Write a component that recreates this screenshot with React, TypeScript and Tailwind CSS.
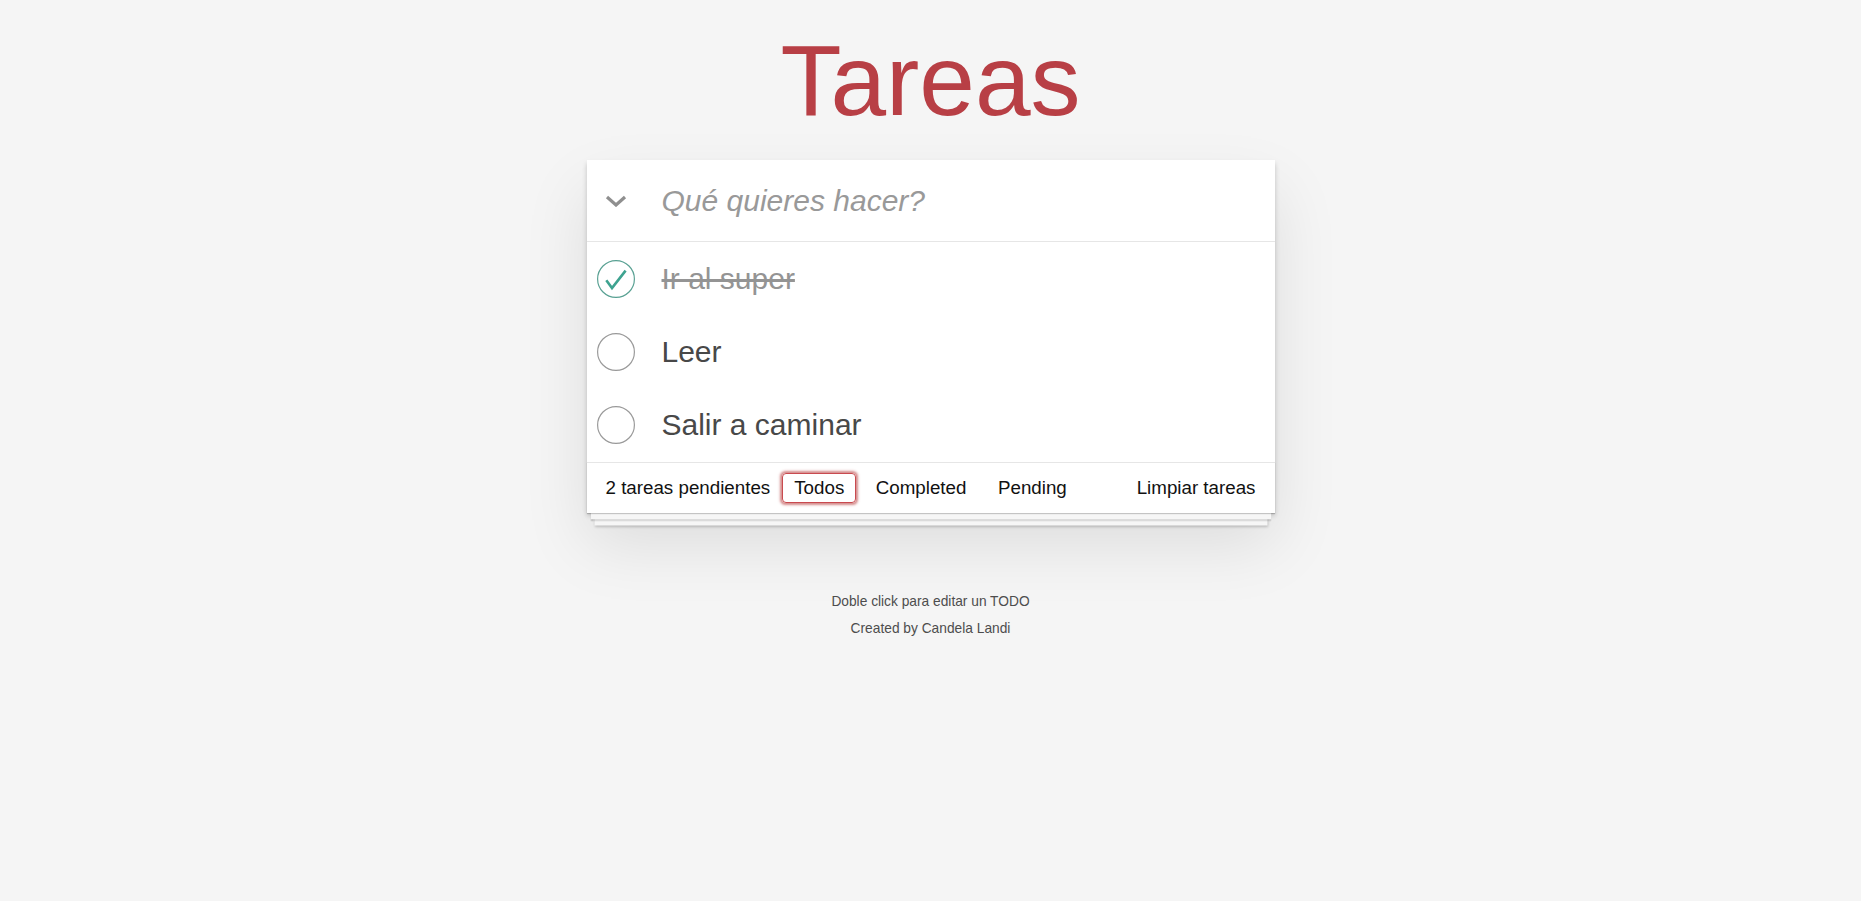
import React from "react";

interface Todo {
  id: number;
  text: string;
  done: boolean;
}

const todos: Todo[] = [
  { id: 1, text: "Ir al super", done: true },
  { id: 2, text: "Leer", done: false },
  { id: 3, text: "Salir a caminar", done: false },
];

const filters = ["Todos", "Completed", "Pending"];

const ToggleCircle: React.FC<{ done: boolean }> = ({ done }) => (
  <svg width="38" height="38" viewBox="0 0 38 38" className="block">
    <circle
      cx="19"
      cy="19"
      r="18.4"
      fill="none"
      stroke={done ? "#59a193" : "#9a9a9a"}
      strokeWidth="1.2"
    />
    {done && (
      <polyline
        points="9.3,20.3 15,28 28.6,10.6"
        fill="none"
        stroke="#3ea390"
        strokeWidth="2.6"
        strokeLinejoin="miter"
      />
    )}
  </svg>
);

const TodoRow: React.FC<{ todo: Todo }> = ({ todo }) => (
  <li className="flex h-[73.33px] items-center">
    <div className="flex w-[75px] shrink-0 pl-[10px]">
      <ToggleCircle done={todo.done} />
    </div>
    <label
      className={`text-[30px] leading-[36px] ${
        todo.done ? "text-[#949494] line-through" : "text-[#484848]"
      }`}
    >
      {todo.text}
    </label>
  </li>
);

const Footer: React.FC = () => (
  <footer className="grid h-[51px] grid-cols-[1fr_auto_1fr] items-center border-t border-[#e6e6e6] px-[19px] text-[18.75px] leading-[25px] text-[#111]">
    <span className="justify-self-start">2 tareas pendientes</span>
    <ul className="flex items-center">
      {filters.map((f) => (
        <li key={f}>
          <a
            className={`mx-[3.75px] flex h-[30px] items-center rounded-[4px] border-[1.25px] px-[11px] ${
              f === "Todos"
                ? "border-[#c94a4f] shadow-[0_0_2.5px_1.5px_rgba(207,125,125,0.9)]"
                : "border-transparent"
            }`}
          >
            {f}
          </a>
        </li>
      ))}
    </ul>
    <button className="justify-self-end text-[18.75px] leading-[25px] text-[#111]">
      Limpiar tareas
    </button>
  </footer>
);

export default function App() {
  return (
    <div className="min-h-[901px] bg-[#f5f5f5] pt-[30px] font-['Liberation_Sans',Arial,sans-serif]">
      <h1 className="text-center text-[100px] leading-[100px] font-normal text-[#b83f45]">
        Tareas
      </h1>

      <section className="mx-auto mt-[30px] w-[688px] bg-white shadow-[0_2.5px_5px_0_rgba(0,0,0,0.2),0_31px_62px_0_rgba(0,0,0,0.1)]">
        <header className="flex h-[82px] items-center border-b border-[#e6e6e6]">
          <div className="flex w-[75px] shrink-0 pl-[18px]">
            <svg width="22" height="12" viewBox="0 0 22 12" className="block">
              <polyline
                points="2,2 11,10 20,2"
                fill="none"
                stroke="#8f8f8f"
                strokeWidth="3.2"
              />
            </svg>
          </div>
          <input
            className="h-[81px] w-full bg-transparent pr-[20px] text-[30px] leading-[42px] text-[#484848] outline-none placeholder:italic placeholder:text-[#999]"
            placeholder="Qué quieres hacer?"
          />
        </header>

        <ul>
          {todos.map((t) => (
            <TodoRow key={t.id} todo={t} />
          ))}
        </ul>

        <div className="shadow-[0_1px_1px_rgba(0,0,0,0.2),0_10px_0_-3.75px_#f6f6f6,0_11.25px_1.25px_-3.75px_rgba(0,0,0,0.2),0_20px_0_-7.5px_#f6f6f6,0_21.25px_2.5px_-7.5px_rgba(0,0,0,0.2)]">
          <Footer />
        </div>
      </section>

      <div className="mt-[82px] flex flex-col items-center gap-[13px] text-[13.75px] leading-[13.75px] text-[#4d4d4d]">
        <p>Doble click para editar un TODO</p>
        <p>Created by Candela Landi</p>
      </div>
    </div>
  );
}
